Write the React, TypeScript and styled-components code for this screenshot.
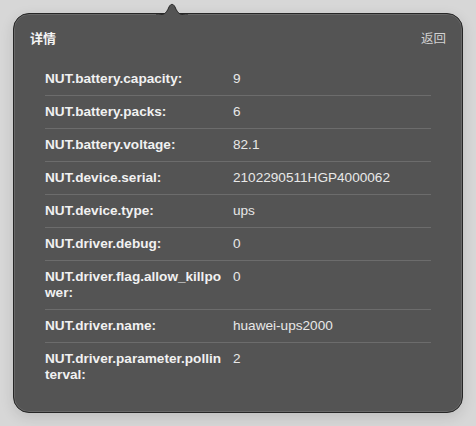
import React from "react";
import styled, { createGlobalStyle } from "styled-components";

const Global = createGlobalStyle`
  html, body { margin: 0; padding: 0; }
  body {
    background: #d7d7d7;
    font-family: "Liberation Sans", "Noto Sans CJK SC", sans-serif;
    -webkit-font-smoothing: antialiased;
  }
`;

const Stage = styled.div`
  width: 476px;
  height: 426px;
  box-sizing: border-box;
  padding: 13px;
`;

const Popover = styled.div`
  position: relative;
  width: 450px;
  height: 400px;
  box-sizing: border-box;
  background: #545454;
  border: 1px solid #262626;
  border-radius: 16px;
  box-shadow: inset 0 0 0 1px rgba(255, 255, 255, 0.12), 0 4px 14px rgba(0, 0, 0, 0.12);
  display: flex;
  flex-direction: column;
`;

const Arrow = styled.svg`
  position: absolute;
  left: 142px;
  top: -12px;
  width: 32px;
  height: 14px;
  overflow: visible;
`;

const Header = styled.div`
  display: flex;
  justify-content: space-between;
  align-items: center;
  padding: 15px 16px 0 16px;
  height: 16px;
`;

const Title = styled.span`
  font-family: "Liberation Sans", "Noto Sans CJK SC", sans-serif;
  font-weight: 700;
  font-size: 13px;
  color: #f4f4f4;
`;

const Back = styled.span`
  font-family: "Noto Sans CJK SC", sans-serif;
  font-size: 12.5px;
  color: #d2d2d2;
`;

const List = styled.div`
  margin: 18px 31px 0 31px;
  display: flex;
  flex-direction: column;
`;

const Row = styled.div<{ $last?: boolean }>`
  display: grid;
  grid-template-columns: 188px 1fr;
  padding: 8px 0 8px;
  line-height: 16px;
  border-bottom: ${(p) => (p.$last ? "none" : "1px solid #6c6c6c")};
`;

const Label = styled.div`
  font-weight: 700;
  font-size: 13.6px;
  color: #f1f1f1;
  width: 179px;
  word-break: break-all;
`;

const Value = styled.div`
  font-size: 13.6px;
  color: #e8e8e8;
  word-break: break-all;
`;

const rows: [string, string][] = [
  ["NUT.battery.capacity:", "9"],
  ["NUT.battery.packs:", "6"],
  ["NUT.battery.voltage:", "82.1"],
  ["NUT.device.serial:", "2102290511HGP4000062"],
  ["NUT.device.type:", "ups"],
  ["NUT.driver.debug:", "0"],
  ["NUT.driver.flag.allow_killpower:", "0"],
  ["NUT.driver.name:", "huawei-ups2000"],
  ["NUT.driver.parameter.pollinterval:", "2"],
];

export default function App() {
  return (
    <Stage>
      <Global />
      <Popover>
        <Arrow viewBox="0 0 32 14">
          <path
            d="M0 13 C8 13 10 12 13 5 C14.5 1.5 17.5 1.5 19 5 C22 12 24 13 32 13"
            fill="#545454"
            stroke="#262626"
            strokeWidth="1"
          />
          <rect x="0" y="13" width="32" height="2" fill="#545454" />
        </Arrow>
        <Header>
          <Title>详情</Title>
          <Back>返回</Back>
        </Header>
        <List>
          {rows.map(([k, v], i) => (
            <Row key={k} $last={i === rows.length - 1}>
              <Label>{k}</Label>
              <Value>{v}</Value>
            </Row>
          ))}
        </List>
      </Popover>
    </Stage>
  );
}
